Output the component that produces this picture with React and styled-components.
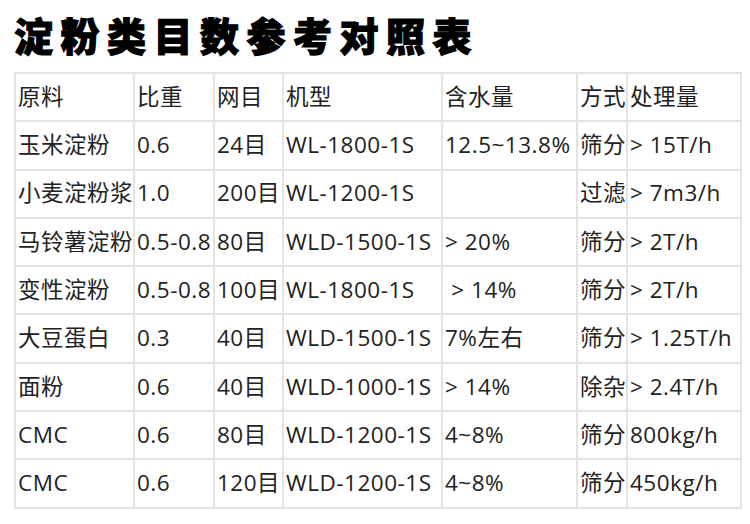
import React from "react";
import styled, { createGlobalStyle } from "styled-components";

const Global = createGlobalStyle`
  html, body { margin: 0; padding: 0; background: #fff; }
  body { font-family: "Open Sans", "Noto Sans CJK SC", sans-serif; }
`;

const Page = styled.div`
  width: 750px;
  height: 524px;
  padding: 15px 0 0 14px;
  box-sizing: border-box;
  overflow: hidden;
`;

const Title = styled.h1`
  margin: 0 0 18px 0;
  font-family: "Noto Sans CJK SC", sans-serif;
  font-weight: 900;
  font-size: 39px;
  line-height: 39px;
  letter-spacing: 7.5px;
  color: #000;
  -webkit-text-stroke: 1.2px #000;
`;

const Table = styled.table`
  border-collapse: collapse;
  table-layout: fixed;
  width: 726px;
`;

const Cell = styled.td`
  border: 2px solid #e3e3e3;
  height: 48.3px;
  box-sizing: border-box;
  padding: 0 0 0 2px;
  font-family: "Open Sans", "Noto Sans CJK SC", sans-serif;
  font-size: 22.5px;
  letter-spacing: 0.5px;
  color: #222;
  white-space: nowrap;
  overflow: hidden;
  vertical-align: middle;
  line-height: 1;
`;

const widths = [119, 80, 69, 159, 135, 50, 114];

const header = ["原料", "比重", "网目", "机型", "含水量", "方式", "处理量"];
const rows = [
  ["玉米淀粉", "0.6", "24目", "WL-1800-1S", "12.5~13.8%", "筛分", "> 15T/h"],
  ["小麦淀粉浆", "1.0", "200目", "WL-1200-1S", "", "过滤", "> 7m3/h"],
  ["马铃薯淀粉", "0.5-0.8", "80目", "WLD-1500-1S", "> 20%", "筛分", "> 2T/h"],
  ["变性淀粉", "0.5-0.8", "100目", "WL-1800-1S", "\u00a0> 14%", "筛分", "> 2T/h"],
  ["大豆蛋白", "0.3", "40目", "WLD-1500-1S", "7%左右", "筛分", "> 1.25T/h"],
  ["面粉", "0.6", "40目", "WLD-1000-1S", "> 14%", "除杂", "> 2.4T/h"],
  ["CMC", "0.6", "80目", "WLD-1200-1S", "4~8%", "筛分", "800kg/h"],
  ["CMC", "0.6", "120目", "WLD-1200-1S", "4~8%", "筛分", "450kg/h"],
];

export default function App() {
  return (
    <>
      <Global />
      <Page>
        <Title>淀粉类目数参考对照表</Title>
        <Table>
          <colgroup>
            {widths.map((w, i) => (
              <col key={i} style={{ width: w }} />
            ))}
          </colgroup>
          <tbody>
            <tr>
              {header.map((h, i) => (
                <Cell key={i}>{h}</Cell>
              ))}
            </tr>
            {rows.map((r, ri) => (
              <tr key={ri}>
                {r.map((c, ci) => (
                  <Cell key={ci}>{c}</Cell>
                ))}
              </tr>
            ))}
          </tbody>
        </Table>
      </Page>
    </>
  );
}
